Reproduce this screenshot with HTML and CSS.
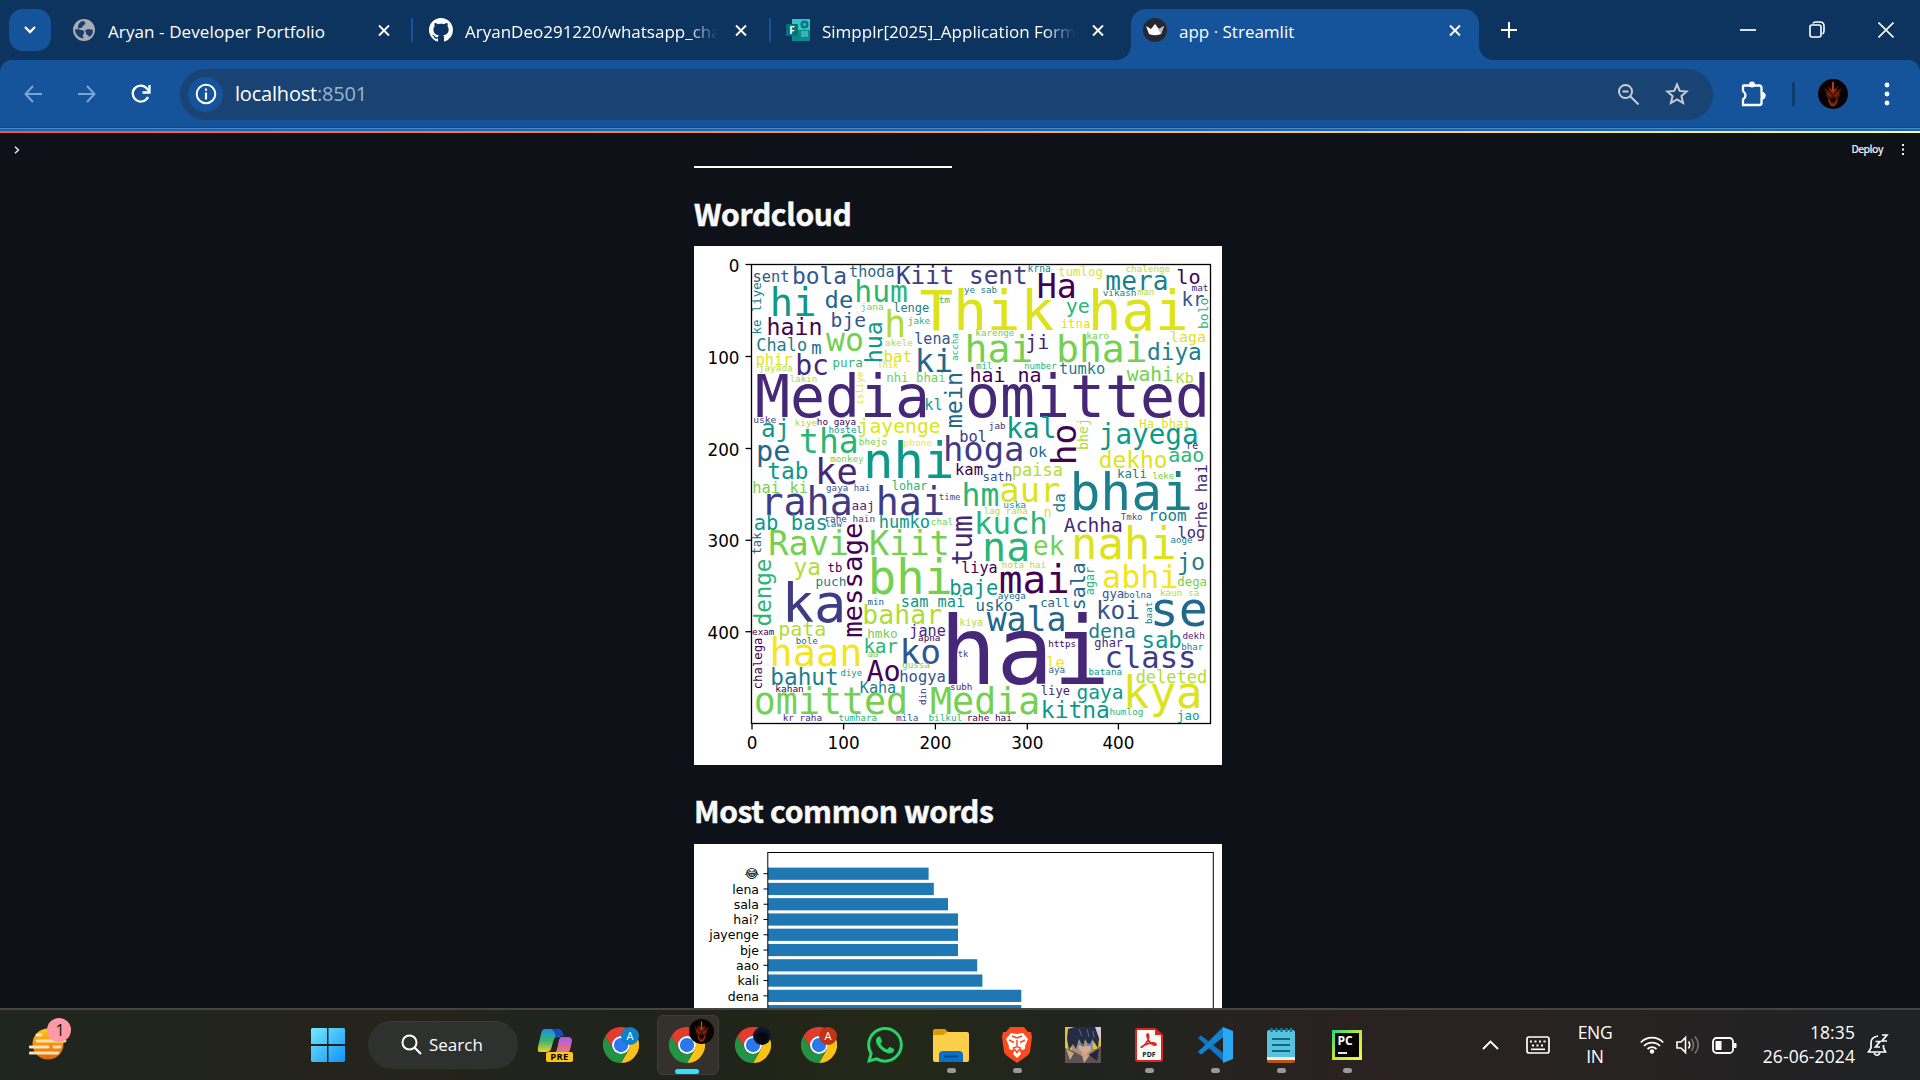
FILE: index.html
```html
<!DOCTYPE html>
<html lang="en">
<head>
<meta charset="utf-8">
<title>app · Streamlit</title>
<link rel="stylesheet" href="styles.css">
</head>
<body>
<svg class="defs" width="0" height="0">
  <symbol id="x" viewBox="0 0 12 12"><path d="M1 1L11 11M11 1L1 11" stroke="#fff" stroke-width="1.9" fill="none"/></symbol>
  <symbol id="chrome" viewBox="0 0 48 48">
    <path fill="#e33b2e" d="M3.2 12A24 24 0 0 1 44.8 12H24A12 12 0 0 0 13.6 30z"/>
    <path fill="#fbc116" d="M44.8 12A24 24 0 0 1 24 48L34.4 30A12 12 0 0 0 24 12z"/>
    <path fill="#229342" d="M24 48A24 24 0 0 1 3.2 12L13.6 30A12 12 0 0 0 34.4 30z"/>
    <circle cx="24" cy="24" r="12" fill="#fff"/><circle cx="24" cy="24" r="9.5" fill="#2b77ee"/>
  </symbol>
  <symbol id="dragon" viewBox="0 0 30 30">
    <circle cx="15" cy="15" r="15" fill="#080302"/>
    <path d="M15 2l1.3 8 4-3-1.5 5 5-3-2.5 6 1 2-2 1-.5 5-2.600 4-2.200 1-2.200-1-2.600-4-.5-5-2-1 1-2-2.500-6 5 3-1.500-5 4 3z" fill="#571606"/>
    <path d="M15 3v9" stroke="#e0481a" stroke-width="1.500"/>
    <path d="M9 14l4 3M21 14l-4 3M11 21l2 5h4l2-5M12 10l3 4 3-4" stroke="#b83a14" stroke-width=".9" fill="none"/>
    <path d="M12 20l3-2 3 2-1 3h-4z" fill="#150502"/>
  </symbol>
</svg>

<header class="tabstrip">
  <button class="tab-search"><svg width="14" height="10" viewBox="0 0 14 10"><path d="M2 2l5 5 5-5" fill="none" stroke="#fff" stroke-width="2.400"/></svg></button>
  <div class="tab first">
    <svg class="fav" width="24" height="24" viewBox="0 0 24 24"><circle cx="12" cy="12" r="11" fill="#a9adb3"/><path d="M10 3c4 0 4 3 2 4s-1 3-4 3-1 2 1 2 4 1 3 3-2 3 0 5c-4 1-9-3-9-9 2 1 3 1 3-2s2-5 4-6zM14 12c3-2 5 0 7 0 0 4-2 6-4 7 0-2-3-2-3-4s-2-2 0-3z" fill="#173f6d"/></svg>
    <span class="tab-title t1">Aryan - Developer Portfolio</span><svg class="close"><use href="#x"/></svg>
  </div>
  <i class="sep"></i>
  <div class="tab">
    <svg class="fav" width="24" height="24" viewBox="0 0 16 16"><path fill="#fff" d="M8 0C3.580 0 0 3.580 0 8c0 3.540 2.290 6.530 5.470 7.590.4.070.55-.17.55-.38 0-.19-.01-.82-.01-1.490-2.010.37-2.530-.49-2.690-.94-.09-.23-.48-.94-.82-1.130-.28-.15-.68-.52-.01-.53.63-.01 1.080.58 1.230.82.72 1.210 1.870.87 2.330.66.07-.52.28-.87.51-1.070-1.780-.2-3.640-.89-3.640-3.950 0-.87.31-1.590.82-2.150-.08-.2-.36-1.020.08-2.120 0 0 .67-.21 2.200.82.64-.18 1.320-.27 2-.27s1.360.09 2 .27c1.530-1.040 2.200-.82 2.200-.82.44 1.100.16 1.920.08 2.120.51.56.82 1.270.82 2.150 0 3.070-1.870 3.750-3.650 3.950.29.25.54.73.54 1.480 0 1.070-.01 1.930-.01 2.200 0 .21.15.46.55.38A8 8 0 0 0 16 8c0-4.420-3.580-8-8-8z"/></svg>
    <span class="tab-title fade t2">AryanDeo291220/whatsapp_chat</span><svg class="close"><use href="#x"/></svg>
  </div>
  <i class="sep"></i>
  <div class="tab third">
    <svg class="fav" width="24" height="24" viewBox="0 0 24 24"><path fill="#30c6cc" d="M6 1h18v12H6z"/><path fill="#078a8c" d="M6 12h18v11H6z"/><path fill="#39b5b3" d="M15 13h7v6h-7z"/><circle cx="18.500" cy="6.500" r="4" fill="#0a7577"/><circle cx="18.500" cy="6.500" r="1.800" fill="#27b7bd"/><rect y="6" width="12" height="12" rx="1" fill="#067274"/><text x="3.200" y="15.600" class="forms-f">F</text></svg>
    <span class="tab-title fade t3">Simpplr[2025]_Application Form</span><svg class="close"><use href="#x"/></svg>
  </div>
  <div class="tab active">
    <svg class="fav" width="24" height="24" viewBox="0 0 24 24"><circle cx="12" cy="12" r="12" fill="#262730"/><path d="M3 8l5 3 4-5 4 5 5-3-3 8q-6 2.500-12 0z" fill="#fff"/><path d="M12 6l4 5 5-3-3 8z" fill="#bbb"/></svg>
    <span class="tab-title t4">app · Streamlit</span><svg class="close"><use href="#x"/></svg>
  </div>
  <svg class="plus" width="16" height="16" viewBox="0 0 16 16"><path d="M8 0v16M0 8h16" stroke="#fff" stroke-width="2"/></svg>
  <div class="window-buttons">
    <svg width="16" height="18" viewBox="0 0 16 18"><path d="M0 9h16" stroke="#fff" stroke-width="1.700"/></svg>
    <svg width="16" height="18" viewBox="0 0 16 18"><rect x="1" y="4" width="11" height="12" rx="2" fill="none" stroke="#fff" stroke-width="1.600"/><path d="M4 2.500Q4.500 1 7 1h4q4 0 4 4v5q0 2-1.500 3" fill="none" stroke="#fff" stroke-width="1.600"/></svg>
    <svg width="16" height="18" viewBox="0 0 16 18"><path d="M.5 1.500l15 15M15.500 1.500l-15 15" stroke="#fff" stroke-width="1.700"/></svg>
  </div>
</header>

<nav class="toolbar">
  <svg class="nav-back" width="18" height="18" viewBox="0 0 18 18"><path d="M18 9H2M9 1L1.500 9L9 17" fill="none" stroke="#7ba4d6" stroke-width="2"/></svg>
  <svg class="nav-fwd" width="18" height="18" viewBox="0 0 18 18"><path d="M0 9h16M9 1l7.500 8L9 17" fill="none" stroke="#7ba4d6" stroke-width="2"/></svg>
  <svg class="nav-reload" width="20" height="20" viewBox="0 0 20 20"><path d="M17 13A8 8 0 1 1 16 4.500L18 7" fill="none" stroke="#fff" stroke-width="2.300"/><path d="M18.500 1v7.500H11.500" fill="none" stroke="#fff" stroke-width="2.300"/></svg>
  <div class="omnibox">
    <span class="info"><svg width="22" height="22" viewBox="0 0 22 22"><circle cx="11" cy="11" r="9.300" fill="none" stroke="#fff" stroke-width="2"/><path d="M11 9.500v7M11 5.500v2.200" stroke="#fff" stroke-width="2.200"/></svg></span>
    <span class="url">localhost<span>:8501</span></span>
    <svg class="mag" width="21" height="21" viewBox="0 0 21 21"><circle cx="7.500" cy="7.500" r="6.500" fill="none" stroke="#c9ccd0" stroke-width="2"/><path d="M12 12l8.500 8.500M4.500 7.500h6" stroke="#c9ccd0" stroke-width="2"/></svg>
    <svg class="star" width="24" height="24" viewBox="0 0 24 24"><path d="M12 2.500l2.700 6.400 7 .6-5.300 4.500 1.700 7L12 17.300 5.900 21l1.700-7-5.300-4.500 7-.6z" fill="none" stroke="#c9ccd0" stroke-width="2"/></svg>
  </div>
  <svg class="puzzle" width="26" height="26" viewBox="0 0 26 26"><path d="M3.500 4.500H9.500a3 3 0 0 1 5 0H19Q21.500 4.500 21.500 7V12a2.500 2.500 0 0 1 0 5.500V22Q21.500 24 19.500 24H3V18.500Q8 14.500 3 10V5z" fill="none" stroke="#fff" stroke-width="2.300"/><circle cx="12" cy="3.500" r="3" fill="#fff"/><circle cx="23" cy="14.500" r="2.600" fill="#fff"/></svg>
  <i class="tb-sep"></i>
  <svg class="avatar" width="30" height="30"><use href="#dragon"/></svg>
  <svg class="menu" width="6" height="24" viewBox="0 0 6 24"><circle cx="3" cy="3" r="2.400" fill="#fff"/><circle cx="3" cy="12" r="2.400" fill="#fff"/><circle cx="3" cy="21" r="2.400" fill="#fff"/></svg>
</nav>

<main class="app">
  <div class="app-header">
    <svg width="6" height="8" viewBox="0 0 6 8"><path d="M1 .8L4.500 4 1 7.200" fill="none" stroke="#fafafa" stroke-width="1.300"/></svg>
    <span class="deploy">Deploy</span>
    <svg width="4" height="11" viewBox="0 0 4 11"><path d="M1 0h2v2H1zM1 4.500h2v2H1zM1 9h2v2H1z" fill="#fafafa"/></svg>
  </div>
  <section class="block">
    <div class="figure-edge"></div>
    <h2 class="h-cloud">Wordcloud</h2>
    <svg id="cloud" class="figure" width="528" height="519" viewBox="694 246 528 519"></svg>
    <h2 class="h-words">Most common words</h2>
    <svg id="bars" class="figure" width="528" height="164" viewBox="694 844 528 164"></svg>
  </section>
</main>

<footer class="taskbar">
  <div class="widgets">
    <svg width="48" height="52" viewBox="0 0 48 52"><defs><linearGradient id="sun" x2="0" y2="1"><stop stop-color="#ffc61c"/><stop offset="1" stop-color="#e2640d"/></linearGradient></defs><ellipse cx="19" cy="30" rx="15.500" ry="15.500" fill="url(#sun)"/><path d="M8 21h4M8 27h28M1 33h18M25 33h6M1 39h28" stroke="#fbe0b0" stroke-width="2.800" stroke-linecap="round"/><circle cx="30" cy="16" r="12" fill="#ff99a4"/><text x="31" y="21.500" text-anchor="middle" class="badge-num">1</text></svg>
  </div>
  <div class="slot"><svg width="36" height="36" viewBox="0 0 36 36"><defs><linearGradient id="win" x2="1" y2="1"><stop stop-color="#77e9ff"/><stop offset="1" stop-color="#0f93fa"/></linearGradient></defs><path d="M2 1H17V17H1V2zM18.500 1H34L35 2V17H18.500zM1 19H17V35H2L1 34zM18.500 19H35V34L34 35H18.500z" fill="url(#win)"/></svg></div>
  <div class="search"><svg width="21" height="21" viewBox="0 0 21 21"><circle cx="8.500" cy="8.500" r="7" fill="none" stroke="#fff" stroke-width="2"/><path d="M13.500 13.500l6.500 6.500" stroke="#fff" stroke-width="2.200"/></svg><span>Search</span></div>
  <div class="slot"><svg width="36" height="36" viewBox="0 0 36 36"><defs><linearGradient id="cp1" x2="0" y2="1"><stop stop-color="#1b8fe8"/><stop offset=".5" stop-color="#3bb273"/><stop offset="1" stop-color="#f0d02a"/></linearGradient><linearGradient id="cp2" x2="0" y2="1"><stop stop-color="#a45bf0"/><stop offset="1" stop-color="#ff7a5c"/></linearGradient></defs><path d="M8 2H21Q25 2 26 8L22 10Q18 8 16 15L14 22Q13 25 9 25H3Q0 25 1 20L4 7Q5 2 8 2z" fill="url(#cp1)"/><path d="M14 2H21Q25 2 27 9H22Q20 9 19 11Q18 4 14 2z" fill="#1649c8"/><path d="M24 10H31Q35 10 35 14L33 23Q31 28 26 28H17Q19 26 20 22L22 13Q23 10 24 10z" fill="url(#cp2)"/><rect x="9" y="25" width="27" height="10" rx="2" fill="#ffc515"/><text x="22.500" y="33.300" text-anchor="middle" class="pre">PRE</text></svg></div>
  <div class="slot"><svg width="36" height="36"><use href="#chrome"/></svg><span class="dot-badge blue">A</span></div>
  <div class="slot current"><svg width="36" height="36"><use href="#chrome"/></svg><svg class="profile" width="25" height="25"><use href="#dragon"/></svg></div>
  <div class="slot"><svg width="36" height="36"><use href="#chrome"/></svg><span class="dot-badge night"></span></div>
  <div class="slot"><svg width="36" height="36"><use href="#chrome"/></svg><span class="dot-badge red">A</span></div>
  <div class="slot"><svg width="36" height="36" viewBox="0 0 16 16"><path fill="#25d366" d="M13.601 2.326A7.850 7.850 0 0 0 7.994 0C3.627 0 .068 3.558.064 7.926c0 1.399.366 2.760 1.057 3.965L0 16l4.204-1.102a7.900 7.900 0 0 0 3.790.965h.004c4.368 0 7.926-3.558 7.930-7.930A7.900 7.900 0 0 0 13.600 2.326zM7.994 14.521a6.600 6.600 0 0 1-3.356-.92l-.24-.144-2.494.654.666-2.433-.156-.251a6.560 6.560 0 0 1-1.007-3.505c0-3.626 2.957-6.584 6.591-6.584a6.560 6.560 0 0 1 4.660 1.931 6.560 6.560 0 0 1 1.928 4.660c-.004 3.639-2.961 6.592-6.592 6.592m3.615-4.934c-.197-.099-1.170-.578-1.353-.646-.182-.065-.315-.099-.445.099-.133.197-.513.646-.627.775-.114.133-.232.148-.43.05-.197-.1-.836-.308-1.592-.985-.59-.525-.985-1.175-1.103-1.372-.114-.198-.011-.304.088-.403.087-.088.197-.232.296-.346.1-.114.133-.198.198-.33.065-.134.034-.248-.015-.347-.05-.099-.445-1.076-.612-1.470-.16-.389-.323-.335-.445-.34-.114-.007-.247-.007-.38-.007a.73.73 0 0 0-.529.247c-.182.198-.691.677-.691 1.654s.71 1.916.81 2.049c.098.133 1.394 2.132 3.383 2.992.47.205.84.326 1.129.418.475.152.904.129 1.246.08.38-.058 1.171-.48 1.338-.943.164-.464.164-.86.114-.943-.049-.084-.182-.133-.38-.232z"/></svg></div>
  <div class="slot open"><svg width="36" height="36" viewBox="0 0 36 36"><path d="M0 4Q0 2 2 2H12L15 5V10H0z" fill="#dc9a06"/><path d="M0 8H10L14 5H34Q36 5 36 7V33Q36 35 34 35H2Q0 35 0 33z" fill="#fdce47"/><path d="M6 35V28Q6 24 10 24H26Q30 24 30 28V35z" fill="#0c6fc4"/><path d="M11 29.500H25" stroke="#074a8a" stroke-width="2"/></svg></div>
  <div class="slot open"><svg width="32" height="36" viewBox="0 0 32 36"><path d="M9 0H23L27 5 30 5 31 10 29 25Q28 28 23 31L16 36 9 31Q4 28 3 25L1 10 2 5 5 5z" fill="#fb4a1d"/><path d="M16 7L22 6 27 12 24 19Q25 22 22 23L18 22 20 27 16 31 12 27 14 22 10 23Q7 22 8 19L5 12 10 6z" fill="#fff"/><path d="M8 13l5 2.500M24 13l-5 2.500M16 13v7M12.500 21L16 19.500 19.500 21 16 25.500zM11 9l5 2 5-2" stroke="#fb4a1d" stroke-width="1.500" fill="none"/></svg></div>
  <div class="slot"><svg width="36" height="36" viewBox="0 0 36 36"><path d="M0 0h36v36H0z" fill="#a99078"/><path d="M0 0h8L6 36H0zM28 8h8v14h-8z" fill="#d9c33e"/><path d="M27 0h9v11l-6 2z" fill="#d9c8d8"/><path d="M3 2L10 0H30L34 11 33 21 27 12 25 20 20 12 18 20 14 12 11 22 8 17 4 23 2 12z" fill="#242c45"/><path d="M14 2l3 7M22 2l2 8M28 4l1 7" stroke="#5b688c"/><path d="M14 17l4 3 7-3 1 6-6 5-6-6z" fill="#d5ab94"/><path d="M14 17l4 1M22 18l4-1" stroke="#378bd1" stroke-width="2"/><path d="M0 21l8 3 9 5 7-2 12-8v17H0z" fill="#5e5254"/><path d="M1 22l8 4-4 7zM16 25l9 3-6 8z" fill="#c8a482"/><path d="M24 28l10-6-2 12z" fill="#25263a"/></svg></div>
  <div class="slot open"><svg width="28" height="34" viewBox="0 0 28 34"><path d="M3 1H20L27 7V31Q27 33 25 33H3Q1 33 1 31V3Q1 1 3 1z" fill="#fafafa" stroke="#e2231a" stroke-width="2"/><path d="M20 1v6h7z" fill="#e2231a"/><path d="M7 19C12 16 15 10 13 6C12 5 11 8 14 13C17 18 22 18 21 16C19 14 12 15 8 18Q5 20 7 19" fill="none" stroke="#e2231a" stroke-width="1.700"/><text x="14" y="28.500" text-anchor="middle" class="pdf">PDF</text></svg></div>
  <div class="slot open"><svg width="36" height="36" viewBox="0 0 36 36"><path d="M1 11l3-2.500 23 18V35z" fill="#1176bd"/><path d="M1 25l3 2.500L27 9.500V1z" fill="#0b68ad"/><path d="M26 0l10 4v28l-10 4z" fill="#29a7f2"/><path d="M1 25L26 0v10L4 27.500z" fill="#1283ce"/></svg></div>
  <div class="slot open"><svg width="28" height="36" viewBox="0 0 28 36"><path d="M0 32h28v2q0 2-2 2H2q-2 0-2-2z" fill="#b5560f"/><path d="M0 29h28v4H0z" fill="#eee"/><path d="M2 3H26Q28 3 28 5V30H0V5Q0 3 2 3z" fill="#58c3df"/><path d="M5 12h18M5 18h18M5 24h18" stroke="#136882" stroke-width="2"/><path d="M4.500 1v4M9.500 1v4M14.500 1v4M19.500 1v4M24 1v4" stroke="#177898" stroke-width="2.500"/></svg></div>
  <div class="slot open"><svg width="30" height="30" viewBox="0 0 30 30"><defs><linearGradient id="pc" x2="1" y2="1"><stop stop-color="#21d789"/><stop offset=".4" stop-color="#a5e83a"/><stop offset="1" stop-color="#fcf84a"/></linearGradient></defs><path d="M0 0h30v30H0z" fill="url(#pc)"/><path d="M3 3h24v24H3z" fill="#050505"/><text x="5.500" y="14.500" class="pc">PC</text><path d="M6 23h9" stroke="#fff" stroke-width="1.800"/></svg></div>
  <div class="tray">
    <svg class="up" width="17" height="10" viewBox="0 0 17 10"><path d="M1 9l7.500-7.500L16 9" fill="none" stroke="#fff" stroke-width="1.900"/></svg>
    <svg class="keyb" width="24" height="18" viewBox="0 0 24 18"><rect x="1" y="1" width="22" height="16" rx="2" fill="none" stroke="#fff" stroke-width="1.700"/><path d="M4 5.500h16M6 9.500h12" stroke="#fff" stroke-width="2" stroke-dasharray="2 2.500"/><path d="M5 13.300h14" stroke="#fff" stroke-width="1.600"/></svg>
    <div class="lang">ENG<br>IN</div>
    <svg class="wifi" width="24" height="18" viewBox="0 0 24 18"><path d="M.8 6.500a15.500 15.500 0 0 1 22.400 0M4 10a11 11 0 0 1 16 0M7.500 13a6.500 6.500 0 0 1 9 0" fill="none" stroke="#fff" stroke-width="1.800"/><circle cx="12" cy="15.500" r="2.200" fill="#fff"/></svg>
    <svg class="vol" width="25" height="20" viewBox="0 0 25 20"><path d="M1 7h4l4.500-4.500v15L5 13H1z" fill="none" stroke="#fff" stroke-width="1.600"/><path d="M12.500 6.500q2.500 3.500 0 7" fill="none" stroke="#fff" stroke-width="1.600"/><path d="M15.500 4q4 6 0 12M19 1.500q6.500 8.500 0 17" fill="none" stroke="#77736e" stroke-width="1.600"/></svg>
    <svg class="bat" width="25" height="17" viewBox="0 0 25 17"><rect x="1" y="1" width="20" height="15" rx="3.500" fill="none" stroke="#fff" stroke-width="1.800"/><rect x="3.500" y="4" width="6" height="9" fill="#fff"/><path d="M22 6h1.500q1 0 1 1v3q0 1-1 1H22z" fill="#fff"/></svg>
    <div class="clock">18:35<br>26-06-2024</div>
    <svg class="bell" width="22" height="24" viewBox="0 0 22 24"><path d="M11 3Q4 4 4 10V15L1.500 19H18.500L16.500 15V12" fill="none" stroke="#fff" stroke-width="1.700"/><path d="M7 20q3 4.500 6 0" fill="none" stroke="#fff" stroke-width="1.700"/><path d="M8.500 8.500h4.500l-4.500 5.500h4.500M15 2h5l-5 6h5" fill="none" stroke="#fff" stroke-width="1.700"/></svg>
  </div>
</footer>
<script src="charts.js"></script>
</body>
</html>
```
FILE: styles.css
```css
* { box-sizing: border-box; }
body { margin: 0; width: 1920px; height: 1080px; overflow: hidden; background: #0e1117; font-family: "Open Sans", "Noto Sans", sans-serif; color: #fff; display: flex; flex-direction: column; }
svg { display: block; flex: none; }
.defs { position: absolute; }

.tabstrip { height: 60px; flex: none; background: #0c345f; display: flex; align-items: center; padding-left: 9px; }
.tab-search { width: 42px; height: 42px; border: 0; border-radius: 14px; background: #15539a; display: flex; align-items: center; justify-content: center; padding: 0; }
.tab { display: flex; align-items: center; width: 356px; height: 60px; padding: 0 22px 0 16px; flex: none; }
.tab.first { width: 360px; padding-left: 21px; padding-right: 21px; }
.tab.third { width: 360px; padding-left: 15px; padding-right: 27px; }
.tab .fav { margin-right: 12px; }
.tab-title { font-size: 17px; line-height: 24px; flex: 1; white-space: nowrap; overflow: hidden; margin-right: 17px; padding-top: 4px; }
.tab-title.fade { -webkit-mask-image: linear-gradient(90deg, #000 88%, transparent); mask-image: linear-gradient(90deg, #000 88%, transparent); }
.close { width: 12px; height: 13px; }
.sep { width: 2px; height: 24px; background: #15539a; flex: none; }
.forms-f { font: bold 10px "Open Sans", sans-serif; fill: #fff; }
.t1 { letter-spacing: .1px; }
.tab.active { position: relative; width: 348px; height: 51px; margin-top: 9px; padding: 0 18px 9px 12px; border-radius: 15px 15px 0 0; background: #15539a; }
.tab.active::before, .tab.active::after { content: ""; position: absolute; bottom: 0; width: 14px; height: 14px; }
.tab.active::before { left: -14px; background: radial-gradient(circle at 0 0, transparent 13.500px, #15539a 14px); }
.tab.active::after { right: -14px; background: radial-gradient(circle at 100% 0, transparent 13.500px, #15539a 14px); }
.plus { margin-left: 22px; }
.window-buttons { display: flex; gap: 53px; margin-left: auto; margin-right: 26px; }

.toolbar { height: 71px; flex: none; background: linear-gradient(#15539a 67px, #0d4a8c 67px, #0d4a8c 68px, #4c86c6 68px, #4c86c6 69px, #0b69b8 69px) #15539a; display: flex; align-items: center; padding: 0 30px 3px 24px; border-radius: 12px 12px 0 0; box-shadow: 0 -12px 0 #0c345f; position: relative; clip-path: inset(0); }
.tabstrip { z-index: 1; }
.nav-fwd { margin-left: 36px; }
.nav-reload { margin-left: 35px; }
.omnibox { margin-left: 29px; width: 1533px; height: 51px; border-radius: 26px; background: #184373; display: flex; align-items: center; padding-left: 8px; }
.info { width: 35px; height: 35px; border-radius: 50%; background: #15539a; display: flex; align-items: center; justify-content: center; }
.url { margin-left: 12px; font-size: 20px; line-height: 26px; letter-spacing: -.2px; }
.url span { color: #9fb3cb; }
.mag { margin-left: auto; }
.star { margin: 0 24px 0 26px; }
.puzzle { margin-left: 27px; }
.tb-sep { width: 3px; height: 24px; background: #0e3c6d; margin-left: 26px; }
.avatar { margin-left: 23px; }
.menu { margin-left: auto; }

.app { flex: 1; min-height: 0; overflow: hidden; background: #0e1117; border-top: 2px solid; border-image: linear-gradient(90deg, #ff4b4b, #ff9b45 50%, #ffc75f 70%, #fffd80) 1; }
.app-header { height: 33px; display: flex; align-items: center; padding: 0 15px 0 14px; }
.deploy { margin-left: auto; margin-right: 18px; font: 10.500px "Noto Sans CJK JP", "Open Sans", sans-serif; color: #fafafa; letter-spacing: -.45px; padding-bottom: 2px; -webkit-text-stroke: .2px #fafafa; }
.block { width: 528px; margin-left: 694px; }
.figure-edge { width: 258px; height: 2px; background: #fff; }
.block h2 { margin: 0; font: bold 30px/40px "Noto Sans CJK JP", "Open Sans", sans-serif; color: #fafafa; white-space: nowrap; letter-spacing: -.35px; -webkit-text-stroke: .5px #fafafa; }
.h-cloud { height: 78px; padding-top: 25px; }
.block .h-words { height: 79px; padding-top: 25px; }
.figure { background: #fff; }
.figure text { font-family: "DejaVu Sans", sans-serif; fill: #000; }
.figure .word { font-family: "DejaVu Sans Mono", monospace; }
.tick { font-size: 16.800px; }
.name { font-size: 12.500px; text-anchor: end; }

.taskbar { height: 72px; flex: none; border-top: 2px solid #454440; background: linear-gradient(90deg, #1f261f, #25231c 22%, #20241e 28%, #202319 36%, #242818 47%, #21241f 58%, #2a2120 70%, #272320 82%, #202226); display: flex; align-items: center; }
.widgets { width: 295px; padding-left: 29px; height: 66px; }
.widgets svg { margin-top: 2px; }
.badge-num { font: 16px "Open Sans", sans-serif; fill: #111; }
.slot { width: 66px; height: 66px; flex: none; display: flex; align-items: center; justify-content: center; position: relative; }
.search { width: 150px; height: 48px; margin: 0 4px 0 7px; border-radius: 24px; background: #2f312e; border-top: 1px solid #3b3d39; display: flex; align-items: center; padding: 0 0 2px 33px; font-size: 17px; flex: none; letter-spacing: 0; }
.search span { margin-left: 7px; }
.slot.current::before { content: ""; position: absolute; inset: 3px 6px 3px 3px; width: 60px; border-radius: 6px; background: #34312d; border: 1px solid #403c37; z-index: 0; }
.slot.current svg { position: relative; }
.slot.current::after { content: ""; position: absolute; left: 21px; bottom: 4px; width: 24px; height: 5px; border-radius: 3px; background: #31dfff; }
.slot.open::after { content: ""; position: absolute; left: 29px; bottom: 5px; width: 9px; height: 5px; border-radius: 3px; background: #999; }
.slot.current .profile { position: absolute; left: 35px; top: 7px; }
.dot-badge { position: absolute; left: 33px; top: 15px; width: 18px; height: 18px; border-radius: 50%; text-align: center; font-size: 11px; line-height: 18px; }
.blue { background: #0c83c8; }
.red { background: #bf3413; }
.night { background: radial-gradient(circle at 50% 60%, #040813 35%, #0b1b34 60%, #050a14); }
.pre { font: bold 9.500px "Open Sans", sans-serif; fill: #000; letter-spacing: .3px; }
.pdf { font: bold 7px "Open Sans", sans-serif; fill: #222; }
.pc { font: bold 12px "Open Sans", sans-serif; fill: #fff; }
.tray { flex: 1; display: flex; align-items: center; font-size: 17.500px; line-height: 24px; padding-left: 102px; letter-spacing: -.3px; }
.keyb { margin-left: 27px; }
.lang { width: 50px; text-align: center; margin-left: 20px; padding-bottom: 3px; }
.wifi { margin-left: 20px; }
.vol { margin-left: 12px; }
.bat { margin-left: 11px; }
.clock { width: 118px; text-align: right; font-size: 17.500px; letter-spacing: .1px; padding-bottom: 3px; }
.bell { margin-left: 12px; }
```
FILE: charts.js
```js
const NS = 'http://www.w3.org/2000/svg';
function add(parent, tag, attrs, text) {
  const el = document.createElementNS(NS, tag);
  for (const k in attrs) el.setAttribute(k, attrs[k]);
  if (text) el.textContent = text;
  parent.appendChild(el);
  return el;
}
const viridis = { a: '#440154', b: '#472878', c: '#3f3b85', d: '#33558c', e: '#22678d', f: '#1c808c', g: '#0d998a', h: '#2ab577', i: '#74d04f', j: '#b2dc35', k: '#dde31a', l: '#f3e51e' };

// Four quarters of the cloud, three units per pixel.
// Horizontal: text,left,right,baseline,colour. Vertical: |text,bottom,top,baseline,colour
const quarters = [
  [690, 240, `sent,192,294,124,d;bola,312,466,129,d;thoda,480,610,110,e;Kiit sent,622,1006,129,c;|ke liye,278,127,214,f;hi,250,372,225,g;de,408,486,203,e;hum,501,650,183,h;jana,515,579,209,i;lenge,612,716,213,f;Thik hai,692,1486,267,k;tm,748,778,186,h;bje,427,525,259,d;hain,236,392,284,a;h,592,640,290,j;jake,656,719,250,h;Chalo,202,348,330,f;m,366,392,340,e;wo,408,516,332,i;|hua,362,248,577,g;akele,587,667,316,j;lena,676,778,309,d;ki,685,784,393,e;phir,201,306,373,k;bc,323,410,404,b;pura,431,515,380,h;bat,585,662,363,k;Thik,563,625,383,k;jayada,209,306,390,j;lakin,301,380,423,j;nhi bhai,592,765,424,i;Media omitted,202,1544,528,b;|isliye,491,395,519,k;kl,708,754,507,g;|accha,360,280,803,h;|mein,560,400,816,e;uske,192,257,547,c;aj,217,285,590,g;kiye,317,380,556,j;ho gaya,383,496,553,a;hostel,418,514,577,g;jayenge,508,749,578,k;tha,333,498,637,h;pe,206,297,662,e;bhejo,509,590,613,i;phone,643,725,615,l;nhi,533,784,712,g;monkey,422,520,663,i;tab,236,352,716,g;ke,387,498,731,b;hoga,768,995,661,c`],
  [950, 240, `krna,236,300,94,f;tumlog,327,455,105,k;chalenge,529,659,93,j;mera,470,649,148,f;lo,683,748,131,a;Ha,266,372,171,a;ye sab,43,140,157,f;mat,726,773,150,b;kr,701,762,195,d;|bolo,262,174,775,h;vikash,459,557,166,f;man,564,611,164,j;ye,350,416,216,h;itna,335,418,262,k;karenge,79,192,285,i;hai bhai,54,586,365,i;ji,232,294,325,b;karo,412,476,296,i;laga,663,764,304,k;diya,595,750,358,f;mil,79,125,384,h;number,225,319,384,h;hai na,64,270,423,a;tumko,330,463,401,f;wahi,530,668,422,i;Kb,680,729,427,j;jab,119,165,564,b;kal,177,312,592,g;|ho,665,556,377,a;|bhej,625,541,413,j;Ha bhai,570,720,562,k;bol,32,107,604,c;Ok,239,290,650,e;jayega,454,739,611,g;re,714,743,625,b;dekho,450,648,683,k;aao,658,759,663,h;kam,20,97,704,a;sath,101,184,720,d;paisa,190,335,706,j;kali,505,589,713,f;leke,609,671,715,i`],
  [690, 480, `hai ki,191,351,38,i;gaya hai,410,539,31,d;lohar,608,711,28,h;raha hai,231,758,104,c;aaj,487,546,88,b;time,748,810,59,d;ab bas,195,408,149,g;rahe hain,408,553,123,c;law,408,456,140,e;humko,571,717,143,g;chal,725,787,133,i;|tak,220,156,214,e;Ravi Kiit,241,770,224,i;|message,468,130,515,a;|denge,433,238,243,h;ya,314,387,284,j;tb,415,455,273,a;puch,380,466,315,f;ka,293,456,423,c;bhi,546,780,341,i;min,534,580,373,d;sam mai,637,823,380,g;bahar,524,754,429,j;exam,188,252,464,a;pata,270,404,467,j;jane,662,765,465,b;apna,686,749,480,a;hmko,535,621,473,i;bole,320,382,489,e;|chalega,623,474,217,a;haan,249,508,556,l;kar,527,622,517,h;aa,534,564,530,i;ko,640,747,550,d;hai,775,1242,611,b;gussa,638,718,563,i;hogya,632,764,603,d;Ao,530,627,600,a;diye,453,515,585,g;bahut,247,440,613,f;Kaha,512,615,638,f;kahan,259,339,634,a;omitted Media,198,1042,701,i;|din,672,626,709,b;kr raha,281,394,720,b;tumhara,447,559,720,h;mila,619,683,720,d;bilkul,718,814,720,h`],
  [950, 480, `hm,43,144,75,h;aur,154,328,63,k;uska,162,226,81,g;lag raha,103,231,100,j;n,285,302,110,k;|da,93,42,344,f;bhai,372,720,88,f;Tmko,513,576,119,e;room,603,708,122,f;|rhe hai,139,-46,772,b;kuch,82,286,161,h;Achha,342,514,155,b;log,686,762,172,b;aoge,663,726,186,f;|tum,250,108,67,b;na,107,231,240,h;ek,254,342,224,i;nahi,375,672,236,k;jo,687,761,267,f;liya,37,139,278,a;hota hai,158,287,262,j;mai,152,352,338,a;|sala,383,250,405,e;|agar,342,260,433,h;abhi,462,680,322,l;dega,684,768,317,i;baje,3,142,342,g;ayega,145,225,355,e;gya,458,520,351,d;bolna,524,602,351,e;kaun sa,633,746,345,j;usko,81,187,392,e;call,274,356,380,e;koi,446,565,415,d;|baat,428,366,605,f;se,614,766,435,e;kiya,32,96,437,j;wala,110,341,450,e;dena,418,553,471,f;sab,581,692,503,g;dekh,699,762,474,b;https,297,376,500,a;ghar,435,518,500,b;bhar,696,759,507,f;tk,25,54,530,c;class,472,731,563,c;le,292,342,563,l;aya,297,343,577,e;batana,418,514,582,g;deleted,560,767,606,j;kya,533,747,683,k;subh,3,65,628,b;liye,275,358,643,b;gaya,383,516,655,g;kitna,280,474,713,g;humlog,481,578,703,h;jao,684,746,717,g;rahe hai,55,184,720,a`]
];

const cloud = document.getElementById('cloud');
const probe = document.createElement('canvas').getContext('2d');
probe.font = '100px "DejaVu Sans Mono"';
for (const [ox, oy, list] of quarters) {
  for (let entry of list.split(';')) {
    const vertical = entry[0] === '|';
    if (vertical) entry = entry.slice(1);
    const [text, p0, p1, base, colour] = entry.split(',');
    // Size each word so that its ink spans exactly from p0 to p1.
    const m = probe.measureText(text);
    const ink = (m.actualBoundingBoxLeft + m.actualBoundingBoxRight) / 100;
    const size = Math.abs(p1 - p0) / 3 / ink;
    const shift = m.actualBoundingBoxLeft / 100 * size;
    const x = ox + (vertical ? +base : +p0) / 3;
    const y = oy + 0.5 + (vertical ? +p0 : +base) / 3;
    const t = add(cloud, 'text', { class: 'word', transform: `translate(${x} ${y})` + (vertical ? ' rotate(-90)' : ''), x: shift }, text);
    t.style.fontSize = size + 'px';
    t.style.fill = viridis[colour];
  }
}
add(cloud, 'rect', { x: 751.5, y: 264.5, width: 459, height: 459, fill: 'none', stroke: '#000', 'stroke-width': 1.3 });
[264.5, 356.5, 448.5, 540.3, 631.7].forEach((y, i) => {
  add(cloud, 'path', { d: `M745.500 ${y}H751.500`, stroke: '#000', 'stroke-width': 1.3 });
  add(cloud, 'text', { class: 'tick', x: 739.5, y: y + 7, 'text-anchor': 'end' }, String(i * 100));
});
[752, 843.6, 935.4, 1027.3, 1118.4].forEach((x, i) => {
  add(cloud, 'path', { d: `M${x} 723.500V729.500`, stroke: '#000', 'stroke-width': 1.3 });
  add(cloud, 'text', { class: 'tick', x, y: 749.4, 'text-anchor': 'middle' }, String(i * 100));
});

const bars = document.getElementById('bars');
const words = [['😂', 928.6], ['lena', 933.8], ['sala', 948], ['hai?', 958], ['jayenge', 958], ['bje', 958], ['aao', 977.2], ['kali', 982.4], ['dena', 1021.3], ['', 1021.3]];
words.forEach(([name, end], i) => {
  const y = 867.6 + i * 15.27;
  add(bars, 'rect', { x: 768, y, width: end - 768, height: 12.2, fill: '#1f77b4' });
  add(bars, 'path', { d: `M763.500 ${y + 6.1}H768`, stroke: '#000' });
  add(bars, 'text', { class: 'name', x: 759, y: y + 10.8 }, name);
});
add(bars, 'rect', { x: 767.8, y: 852.5, width: 445.5, height: 400, fill: 'none', stroke: '#000' });
```
